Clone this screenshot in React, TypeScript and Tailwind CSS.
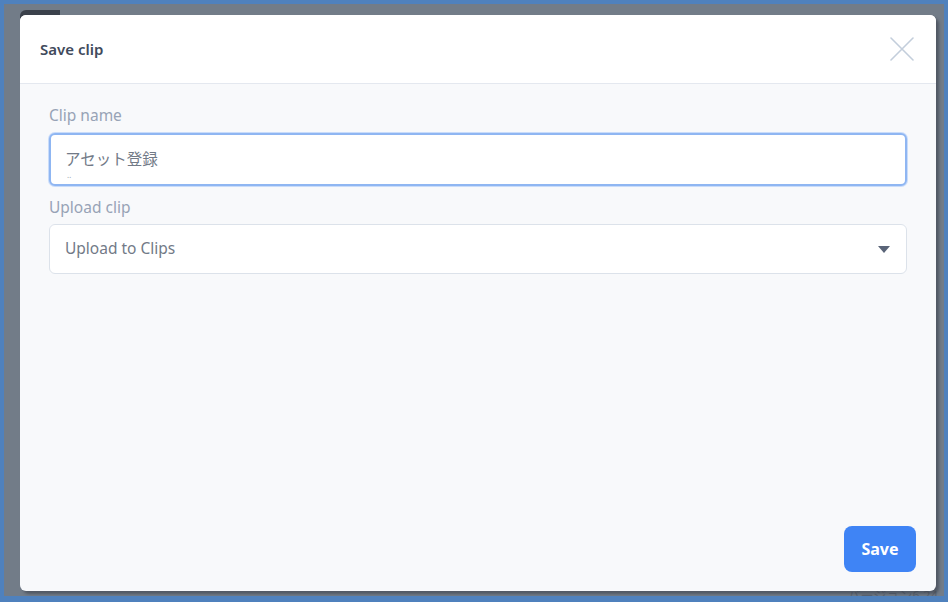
import React from "react";

const font = { fontFamily: '"Noto Sans", "Noto Sans CJK JP", sans-serif' };

const App = () => {
  return (
    <div
      className="relative h-[602px] w-[948px] overflow-hidden border-x-4 border-t-4 border-b-[6px] border-[#4f81bd] bg-[#727c88] pl-4 pt-[11px]"
      style={font}
    >
      {/* tab peeking above modal */}
      <div className="absolute left-4 top-[6px] h-3 w-10 rounded-tl-md bg-[#3b414b]" />

      {/* version text behind modal */}
      <div className="absolute bottom-[-9px] right-[6px] text-[13px] text-[#5d6672]">バージョン6.24</div>

      {/* Modal */}
      <div className="relative flex h-[576px] w-[916px] flex-col overflow-hidden rounded-md bg-[#f8f9fb] shadow-[3px_3px_3px_rgba(40,45,55,0.45)]">
        {/* Header */}
        <div className="flex h-[69px] shrink-0 items-center justify-between border-b border-[#e4e8ef] bg-white pl-5 pr-[22px]">
          <h2 className="text-[15px] font-semibold text-[#3f4a5c]">Save clip</h2>
          <button className="text-[#c3cedb]">
            <svg width="24" height="24" viewBox="0 0 24 24" fill="none" stroke="currentColor" strokeWidth="1.6" strokeLinecap="round">
              <path d="M1 1L23 23M23 1L1 23" />
            </svg>
          </button>
        </div>

        {/* Body */}
        <div className="flex flex-1 flex-col px-[29px] pt-[21px]">
          <label className="text-[15.5px] leading-5 text-[#97a3b6]">Clip name</label>
          <div className="relative mt-[8px] flex h-[53px] items-center rounded-md border-2 border-[#8fb6f2] bg-white px-[14px] shadow-[0_0_0_1px_#c9dcfa]">
            <span className="text-[15.5px] text-[#727a87]">アセット登録</span>
            <span className="absolute left-[16px] top-[36px] text-[8px] leading-none tracking-[1px] text-[#9aa3af]">‥</span>
          </div>

          <label className="mt-[11px] text-[15.5px] leading-5 text-[#97a3b6]">Upload clip</label>
          <div className="mt-[7px] flex h-[50px] items-center justify-between rounded-md border border-[#dce2ea] bg-white pl-[15px] pr-4">
            <span className="text-[15.5px] text-[#727a87]">Upload to Clips</span>
            <svg width="12" height="7" viewBox="0 0 12 7">
              <path d="M0 0H12L6 7Z" fill="#5a6478" />
            </svg>
          </div>

          <div className="mt-auto flex justify-end pb-[19px]">
            <button className="-mr-[9px] h-[46px] w-[72px] rounded-lg bg-[#3f84f5] text-[16px] font-bold text-white">
              Save
            </button>
          </div>
        </div>
      </div>
    </div>
  );
};

export default App;
